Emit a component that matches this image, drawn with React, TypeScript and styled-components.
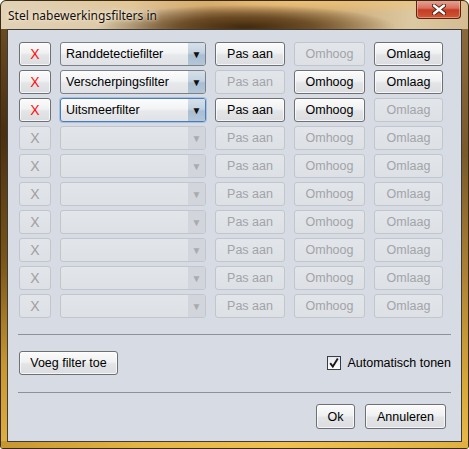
import React from "react";
import styled, { createGlobalStyle, css } from "styled-components";

const Global = createGlobalStyle`
  html, body { margin: 0; padding: 0; background: #ffffff; }
  body { font-family: "Liberation Sans", Arial, sans-serif; }
`;

const Frame = styled.div`
  width: 469px;
  height: 449px;
  box-sizing: border-box;
  border: 1px solid #3a2a14;
  border-radius: 6px 6px 3px 3px;
  display: flex;
  flex-direction: column;
  padding: 0 6px 6px 6px;
  background:
    radial-gradient(ellipse 150px 22px at 245px 26px, rgba(60, 36, 8, 0.95) 0%, rgba(80, 50, 14, 0.75) 45%, rgba(120, 80, 30, 0) 100%),
    radial-gradient(ellipse 260px 12px at 300px 1px, rgba(240, 196, 120, 0.9) 0%, rgba(240, 196, 120, 0) 100%),
    linear-gradient(to right, #e2d2b6 0%, #dcc8a4 28%, #b89060 45%, #caa874 70%, #dcc8a2 88%, #d4bc92 100%);
  background-size: 100% 30px, 100% 30px, 100% 30px;
  background-repeat: no-repeat;
  background-color: #d8a838;
  position: relative;
  overflow: hidden;
`;

const SideShade = styled.div<{ $side: "left" | "right" }>`
  position: absolute;
  top: 28px;
  bottom: 0;
  width: 7px;
  ${(p) =>
    p.$side === "left"
      ? css`left: 0; background: linear-gradient(to bottom, #6a4a20 0%, #4a3010 25%, #7a5418 55%, #c89630 80%, #e0b040 100%);`
      : css`right: 0; background: linear-gradient(to bottom, #8a6a3c 0%, #7a5a2c 30%, #b08436 60%, #d8a838 85%, #e8b848 100%);`}
`;

const BottomShade = styled.div`
  position: absolute;
  left: 0;
  right: 0;
  bottom: 0;
  height: 7px;
  background: linear-gradient(to right, #c89630 0%, #e4b444 30%, #f0c050 60%, #e0b040 100%);
`;

const TitleBar = styled.div`
  height: 28px;
  display: flex;
  align-items: flex-start;
  justify-content: space-between;
  position: relative;
  z-index: 1;
`;

const TitleText = styled.div`
  font-family: "Noto Sans", "Open Sans", sans-serif;
  font-size: 12px;
  color: #101010;
  padding-top: 6px;
  padding-left: 1px;
  text-shadow: 0 0 6px rgba(255, 240, 220, 0.9), 0 0 3px rgba(255, 240, 220, 0.9);
`;

const CloseButton = styled.div`
  width: 45px;
  height: 19px;
  margin-right: 1px;
  margin-top: -1px;
  box-sizing: border-box;
  border: 1px solid #5a2414;
  border-top: none;
  border-radius: 0 0 4px 4px;
  background: linear-gradient(to bottom, #e8a898 0%, #d87060 45%, #c43c22 55%, #d05838 100%);
  box-shadow: inset 0 0 0 1px rgba(255, 200, 180, 0.5);
  display: flex;
  align-items: center;
  justify-content: center;
`;

const Client = styled.div`
  flex: 1;
  border: 1px solid #3c3c3c;
  background: #d7dbe3;
  display: flex;
  flex-direction: column;
  padding: 12px 9px 11px 11px;
  position: relative;
  z-index: 1;
`;

const Rows = styled.div`
  display: grid;
  grid-template-columns: 32px 146px 70px 71px 69px;
  grid-auto-rows: 24px;
  column-gap: 9px;
  row-gap: 4px;
`;

const buttonBase = css<{ $disabled?: boolean }>`
  box-sizing: border-box;
  height: 24px;
  border-radius: 3px;
  font-family: "Liberation Sans", Arial, sans-serif;
  font-size: 12.5px;
  display: flex;
  align-items: center;
  justify-content: center;
  ${(p) =>
    p.$disabled
      ? css`
          border: 1px solid #c2c6cc;
          background: linear-gradient(to bottom, #e2e5ea, #dde0e5);
          color: #a2a4a8;
        `
      : css`
          border: 1px solid #6e7074;
          background: linear-gradient(to bottom, #fbfbfb 0%, #f0f1f2 45%, #e3e4e6 55%, #dcdde0 100%);
          color: #000000;
          box-shadow: inset 0 0 0 1px rgba(255, 255, 255, 0.7);
        `}
`;

const Button = styled.div<{ $disabled?: boolean; $width?: number; $height?: number }>`
  ${buttonBase}
  ${(p) => (p.$width ? `width: ${p.$width}px;` : "")}
  ${(p) => (p.$height ? `height: ${p.$height}px;` : "")}
`;

const RemoveButton = styled.div<{ $disabled?: boolean }>`
  ${buttonBase}
  font-size: 14px;
  color: ${(p) => (p.$disabled ? "#a0a0a0" : "#ff1010")};
`;

const Combo = styled.div<{ $disabled?: boolean; $focused?: boolean }>`
  box-sizing: border-box;
  height: 24px;
  border-radius: 3px;
  display: flex;
  overflow: hidden;
  font-family: "Liberation Sans", Arial, sans-serif;
  font-size: 12.5px;
  ${(p) =>
    p.$disabled
      ? css`
          border: 1px solid #c2c6cc;
          background: linear-gradient(to bottom, #e2e5ea, #dde0e5);
        `
      : css`
          border: 1px solid ${p.$focused ? "#4a7cb8" : "#7c8088"};
          background: linear-gradient(to bottom, #fcfcfc 0%, #f2f3f5 45%, #e6e8eb 55%, #e0e2e6 100%);
          ${p.$focused ? "box-shadow: 0 0 0 1px rgba(110, 160, 220, 0.45);" : ""}
        `}
`;

const ComboText = styled.div`
  flex: 1;
  padding-left: 5px;
  display: flex;
  align-items: center;
  color: #000;
`;

const ComboArrow = styled.div<{ $disabled?: boolean }>`
  width: 17px;
  display: flex;
  align-items: center;
  justify-content: center;
  font-size: 10px;
  ${(p) =>
    p.$disabled
      ? css`
          background: #d2d6dc;
          color: #a8abb0;
        `
      : css`
          background: linear-gradient(to bottom, #d6e0ea 0%, #c4d2e0 45%, #aabed2 55%, #b4c6d8 100%);
          color: #101010;
        `}
`;

const Separator = styled.div`
  height: 1px;
  background: #8e9298;
  margin: 0 1px 0 -1px;
`;

const Spacer = styled.div<{ $h: number }>`
  height: ${(p) => p.$h}px;
  flex: none;
`;

const ActionRow = styled.div`
  display: flex;
  align-items: center;
  justify-content: space-between;
  padding-right: 1px;
`;

const CheckLabel = styled.label`
  display: flex;
  align-items: center;
  gap: 6px;
  font-family: "Liberation Sans", Arial, sans-serif;
  font-size: 12.5px;
  color: #000;
`;

const CheckBox = styled.div`
  width: 14px;
  height: 14px;
  box-sizing: border-box;
  border: 1px solid #3a3d42;
  background: linear-gradient(to bottom, #e4e8ee, #ffffff);
  display: flex;
  align-items: center;
  justify-content: center;
`;

const FooterRow = styled.div`
  display: flex;
  justify-content: flex-end;
  gap: 10px;
  padding-right: 6px;
`;

type Filter = { name: string; first?: boolean; last?: boolean; focused?: boolean };

const filters: Filter[] = [
  { name: "Randdetectiefilter", first: true },
  { name: "Verscherpingsfilter" },
  { name: "Uitsmeerfilter", last: true, focused: true },
];

const TOTAL_ROWS = 10;

export default function App() {
  const rows = Array.from({ length: TOTAL_ROWS }, (_, i) => filters[i]);
  return (
    <>
      <Global />
      <Frame>
        <SideShade $side="left" />
        <SideShade $side="right" />
        <BottomShade />
        <TitleBar>
          <TitleText>Stel nabewerkingsfilters in</TitleText>
          <CloseButton>
            <svg width="14" height="11" viewBox="0 0 14 11">
              <path
                d="M2 1.5 L12 9.5 M12 1.5 L2 9.5"
                stroke="#4a2010"
                strokeWidth="4.2"
                strokeLinecap="round"
              />
              <path
                d="M2 1.5 L12 9.5 M12 1.5 L2 9.5"
                stroke="#ffffff"
                strokeWidth="2.4"
                strokeLinecap="round"
              />
            </svg>
          </CloseButton>
        </TitleBar>
        <Client>
          <Rows>
            {rows.map((f, i) => {
              const dis = !f;
              return (
                <React.Fragment key={i}>
                  <RemoveButton $disabled={dis}>X</RemoveButton>
                  <Combo $disabled={dis} $focused={f?.focused}>
                    <ComboText>{f ? f.name : ""}</ComboText>
                    <ComboArrow $disabled={dis}>▼</ComboArrow>
                  </Combo>
                  <Button $disabled={dis || i === 1}>Pas aan</Button>
                  <Button $disabled={dis || !!f?.first}>Omhoog</Button>
                  <Button $disabled={dis || !!f?.last}>Omlaag</Button>
                </React.Fragment>
              );
            })}
          </Rows>
          <Spacer $h={16} />
          <Separator />
          <Spacer $h={16} />
          <ActionRow>
            <Button $width={99}>Voeg filter toe</Button>
            <CheckLabel>
              <CheckBox>
                <svg width="12" height="12" viewBox="0 0 12 12">
                  <path d="M2.2 6.2 L4.8 9.6 L9.8 1.6" fill="none" stroke="#1a1a1a" strokeWidth="1.9" />
                </svg>
              </CheckBox>
              Automatisch tonen
            </CheckLabel>
          </ActionRow>
          <Spacer $h={17} />
          <Separator />
          <Spacer $h={11} />
          <FooterRow>
            <Button $width={39} $height={25}>Ok</Button>
            <Button $width={81} $height={25}>Annuleren</Button>
          </FooterRow>
        </Client>
      </Frame>
    </>
  );
}
